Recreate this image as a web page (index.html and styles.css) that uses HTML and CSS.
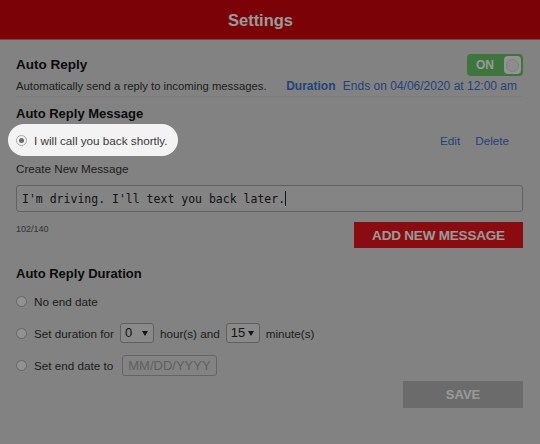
FILE: index.html
```html
<!DOCTYPE html>
<html lang="en">
<head>
  <meta charset="UTF-8">
  <meta name="viewport" content="width=device-width, initial-scale=1.0">
  <title>Settings</title>
  <link rel="stylesheet" href="styles.css">
</head>
<body>
  <header class="top-bar">Settings</header>

  <main class="panel">
    <!-- auto reply on/off -->
    <section class="block first">
      <div class="row-between">
        <h2>Auto Reply</h2>
        <button class="toggle" type="button">
          <span class="toggle-label">ON</span>
          <span class="toggle-knob"><span class="knob-dot"></span></span>
        </button>
      </div>
      <div class="row-between desc-line">
        <span>Automatically send a reply to incoming messages.</span>
        <span class="duration"><b>Duration</b> Ends on 04/06/2020 at 12:00 am</span>
      </div>
    </section>

    <!-- saved messages -->
    <section class="block">
      <h2>Auto Reply Message</h2>
      <div class="row-between msg-row">
        <label class="radio spotlight">
          <span class="dot checked"></span>
          I will call you back shortly.
        </label>
        <div class="msg-actions">
          <a href="#">Edit</a>
          <a href="#">Delete</a>
        </div>
      </div>

      <div class="field-label">Create New Message</div>
      <div class="text-input">I'm driving. I'll text you back later.<span class="caret"></span></div>
      <div class="row-between add-row">
        <span class="counter">102/140</span>
        <button class="btn btn-red" type="button">ADD NEW MESSAGE</button>
      </div>
    </section>

    <!-- duration options -->
    <section class="block">
      <h2>Auto Reply Duration</h2>
      <div class="options">
        <label class="radio"><span class="dot"></span>No end date</label>
        <label class="radio">
          <span class="dot"></span>Set duration for
          <span class="select">0</span>
          hour(s) and
          <span class="select">15</span>
          minute(s)
        </label>
        <label class="radio">
          <span class="dot"></span>Set end date to
          <span class="date-input">MM/DD/YYYY</span>
        </label>
      </div>
      <div class="save-row">
        <button class="btn btn-save" type="button">SAVE</button>
      </div>
    </section>
  </main>
</body>
</html>
```

FILE: styles.css
```css
body {
  margin: 0;
  font-family: "Liberation Sans", Arial, sans-serif;
  font-size: 11.7px;
  color: #333;
  background: #d9d9d9;
  height: 444px;
  overflow: hidden;
}
.top-bar {
  height: 40px;
  line-height: 41px;
  padding-right: 19px;
  background: #cd040b;
  color: #fff;
  text-align: center;
  font-size: 16.5px;
  font-weight: bold;
  border-bottom: 1px solid #e56a6e;
  box-sizing: border-box;
}
.panel {
  padding: 0 17px 0 16px;
}
h2 {
  margin: 0;
  font-size: 13px;
  line-height: 16px;
  color: #111;
}
.row-between {
  display: flex;
  justify-content: space-between;
  align-items: center;
}
.block.first {
  padding-top: 14px;
  padding-bottom: 2px;
  border-bottom: 1px solid #cfcfcf;
}
.block.first h2 {
  font-size: 13.5px;
}
.desc-line {
  margin-top: 2px;
  line-height: 16px;
  padding-right: 6px;
  font-size: 11.3px;
}
.duration {
  color: #3b6fc9;
  font-size: 12px;
}
.duration b {
  margin-right: 4px;
}

/* on/off switch */
.toggle {
  width: 56px;
  height: 22px;
  padding: 0 2px 0 9px;
  border: 0;
  border-radius: 4px;
  background: #66c466;
  display: flex;
  align-items: center;
  justify-content: space-between;
  font-family: inherit;
  cursor: pointer;
}
.toggle-label {
  color: #fff;
  font-size: 12px;
  font-weight: bold;
}
.toggle-knob {
  width: 17px;
  height: 18px;
  background: #f6f6f6;
  border-radius: 4px;
  display: flex;
  align-items: center;
  justify-content: center;
}
.knob-dot {
  width: 11px;
  height: 11px;
  border-radius: 50%;
  border: 1px solid #d2d2d2;
  background: #ececec;
}

.block h2 {
  margin-top: 9px;
}
.block.first h2 {
  margin-top: 0;
}
.msg-row {
  margin-top: 2px;
}
.radio {
  display: flex;
  align-items: center;
  height: 22px;
  color: #333;
  gap: 6px;
}
.dot {
  width: 9px;
  height: 9px;
  border-radius: 50%;
  border: 1px solid #a8a8a8;
  background: #f4f4f4;
  margin-right: 1px;
  position: relative;
  flex: none;
}
.dot.checked::after {
  content: "";
  position: absolute;
  left: 2px;
  top: 2px;
  width: 5px;
  height: 5px;
  border-radius: 50%;
  background: #6a6a6a;
}

/* highlighted item sits above the dimmed page */
.spotlight {
  position: relative;
  z-index: 10;
  height: 32px;
  margin-left: -8px;
  padding: 0 10px 0 8px;
  border-radius: 16px;
  background: #f3f3f3;
  color: #3a3a3a;
  box-shadow: 0 0 0 1200px rgba(0, 0, 0, 0.4);
}
.msg-actions {
  display: flex;
  gap: 15px;
  padding-right: 14px;
}
.msg-actions a {
  color: #3b6fc9;
  text-decoration: none;
}

.field-label {
  margin-top: 5px;
  line-height: 16px;
}
.text-input {
  margin-top: 8px;
  height: 27px;
  box-sizing: border-box;
  border: 1px solid #a3a3a3;
  border-radius: 3px;
  background: #dcdcdc;
  padding: 0 5px;
  display: flex;
  align-items: center;
  font-family: "DejaVu Sans Mono", "Liberation Mono", monospace;
  font-size: 11.5px;
  color: #222;
  white-space: pre;
}
.caret {
  width: 1px;
  height: 15px;
  background: #222;
}
.add-row {
  margin-top: 10px;
  align-items: flex-start;
}
.counter {
  font-size: 9px;
  color: #555;
  margin-top: 2px;
}
.btn {
  border: 0;
  font-family: inherit;
  font-weight: bold;
  color: #fff;
  cursor: pointer;
}
.btn-red {
  width: 169px;
  height: 26px;
  background: #e8141c;
  font-size: 13.5px;
  letter-spacing: -0.2px;
}

.block:last-child h2 {
  margin-top: 18px;
}
.options {
  margin-top: 8px;
  display: flex;
  flex-direction: column;
  gap: 10px;
}
.select {
  position: relative;
  width: 34px;
  height: 20px;
  box-sizing: border-box;
  border: 1px solid #a0a0a0;
  border-radius: 3px;
  background: #e4e4e4;
  padding-left: 4px;
  line-height: 18px;
  font-size: 13px;
  color: #222;
}
.select::after {
  content: "";
  position: absolute;
  right: 5px;
  top: 7px;
  border-left: 3px solid transparent;
  border-right: 3px solid transparent;
  border-top: 5px solid #222;
}
.date-input {
  width: 95px;
  height: 21px;
  margin-left: 3px;
  box-sizing: border-box;
  border: 1px solid #a8a8a8;
  border-radius: 3px;
  padding-left: 5px;
  line-height: 19px;
  font-size: 13px;
  color: #a0a0a0;
  background: #dadada;
}
.save-row {
  display: flex;
  justify-content: flex-end;
  margin-top: 5px;
}
.btn-save {
  width: 120px;
  height: 27px;
  background: #b3b3b3;
  font-size: 13px;
}
```
